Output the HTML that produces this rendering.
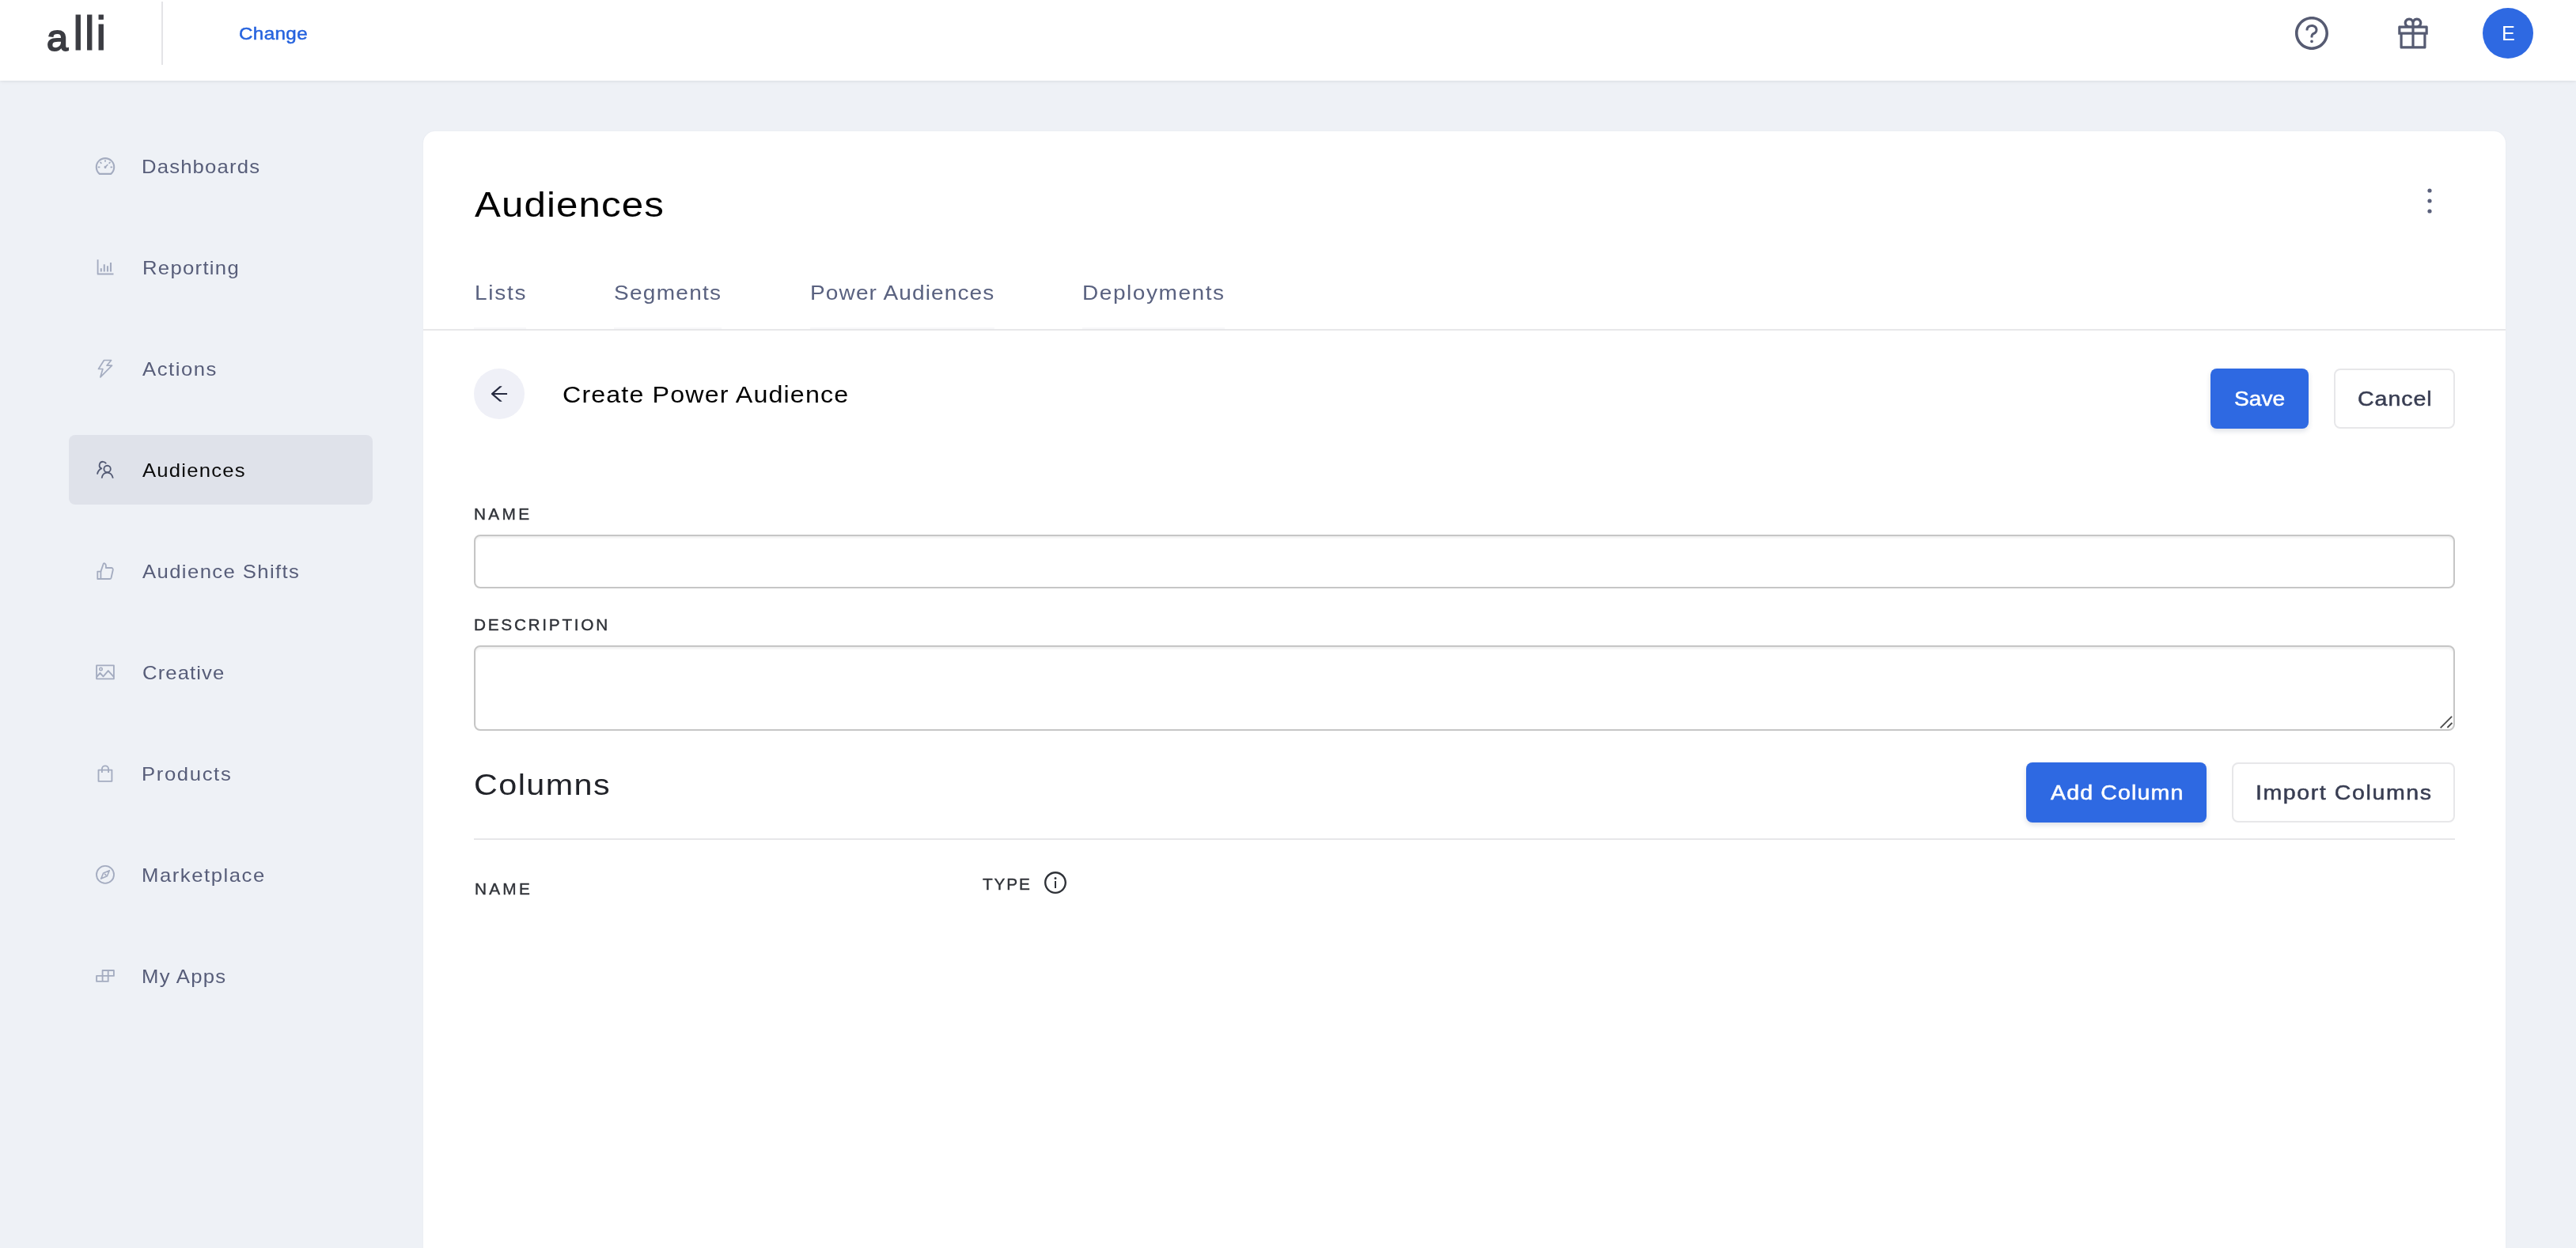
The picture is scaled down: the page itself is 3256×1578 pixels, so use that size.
<!DOCTYPE html>
<html lang="en"><head><meta charset="utf-8"><title>Alli - Audiences</title>
<style>
html,body{margin:0;padding:0}
body{width:3256px;height:1578px;overflow:hidden;position:relative;background:#eef1f6;font-family:"Liberation Sans",sans-serif}
.a{position:absolute;display:block}
.t{position:absolute;display:block;will-change:transform;white-space:pre;line-height:1;transform-origin:0 50%;text-decoration:none;margin:0;font-weight:400}
#hdr{left:0;top:0;width:3256px;height:102px;background:#fff;box-shadow:0 1px 4px rgba(0,0,0,.085)}
#vdiv{left:204px;top:2px;width:2px;height:80px;background:#e4e4e7}
#avatar{left:3138px;top:10px;width:64px;height:64px;border-radius:50%;background:#2e69e2}
.nav{position:absolute;left:87px;width:384px;height:88px;border-radius:8px;display:block}
.nav.sel{background:#dfe2ea}
#card{left:535px;top:166px;width:2632px;height:1500px;background:#fff;border-radius:15px;box-shadow:0 0 3px rgba(60,70,110,.045)}
#tabline{left:535px;top:416px;width:2632px;height:2px;background:#e7e7e9}
.tabu{position:absolute;top:414px;height:2px;background:#f8f8fa}
#back{left:599px;top:466px;width:64px;height:64px;border-radius:50%;background:#eff0f7}
.btn{position:absolute;box-sizing:border-box;height:76px;border-radius:8px;border:0;padding:0;margin:0}
.btn.p{background:#2e69e2;box-shadow:0 3px 6px rgba(20,40,90,.15)}
.btn.s{background:#fff;border:2px solid #e7e7e9}
.inp{position:absolute;box-sizing:border-box;left:599px;width:2504px;border:2px solid #c6c6c6;border-radius:8px;background:#fff;box-shadow:inset 0 2px 3px rgba(0,0,0,.07);margin:0;padding:0;resize:none;outline:0}
#colline{left:599px;top:1060px;width:2504px;height:2px;background:#e7e7e9}
</style></head><body>
<header id="hdr" class="a"></header>
<div id="logo"><span class="t" style="left:58.9px;top:25px;font-size:46px;color:#3b3c42;letter-spacing:0.0px;-webkit-text-stroke:1.8px #3b3c42;transform:scaleX(1.058);">a</span><span class="t" style="left:92.0px;top:12px;font-size:60.6px;color:#3b3c42;letter-spacing:1.0px;-webkit-text-stroke:1.0px #3b3c42;">lli</span></div>
<div id="vdiv" class="a"></div>
<a class="t" style="left:302.2px;top:32px;font-size:22.6px;color:#2663de;letter-spacing:0.36px;-webkit-text-stroke:0.5px #2663de;transform:scaleX(1.07);">Change</a>
<svg class="a" style="left:2898.0px;top:18.0px" width="48" height="48" viewBox="0 0 1024 1024" fill="#565b72"><path d="M512 64C264.600 64 64 264.600 64 512s200.600 448 448 448 448-200.600 448-448S759.400 64 512 64zm0 820c-205.400 0-372-166.600-372-372s166.600-372 372-372 372 166.600 372 372-166.600 372-372 372z"/><path d="M623.600 316.700C593.600 290.400 554 276 512 276s-81.600 14.500-111.600 40.700C369.200 344 352 380.700 352 420v7.600c0 4.400 3.600 8 8 8h48c4.400 0 8-3.600 8-8V420c0-44.100 43.100-80 96-80s96 35.900 96 80c0 31.100-22 59.600-56.100 72.700-21.200 8.100-39.200 22.300-52.100 40.900-13.100 19-19.900 41.800-19.900 64.900V620c0 4.400 3.600 8 8 8h48c4.400 0 8-3.600 8-8v-22.700a48.300 48.300 0 0 1 30.900-44.800c59-22.700 97.100-74.700 97.100-132.500.1-39.300-17.100-76-48.300-103.300zM472 732a40 40 0 1 0 80 0 40 40 0 1 0-80 0z"/></svg>
<svg class="a" style="left:3026.0px;top:18.0px" width="48" height="48" viewBox="0 0 1024 1024" fill="#565b72"><path d="M880 310H732.400c13.600-21.400 21.600-46.800 21.600-74 0-76.100-61.900-138-138-138-41.400 0-78.700 18.400-104 47.400-25.300-29-62.600-47.400-104-47.400-76.100 0-138 61.900-138 138 0 27.200 7.900 52.600 21.600 74H144c-17.700 0-32 14.300-32 32v200c0 4.400 3.600 8 8 8h40v344c0 17.700 14.300 32 32 32h640c17.700 0 32-14.300 32-32V550h40c4.400 0 8-3.600 8-8V342c0-17.700-14.300-32-32-32zm-334-74c0-38.600 31.400-70 70-70s70 31.400 70 70-31.400 70-70 70h-70v-70zm-138-70c38.600 0 70 31.400 70 70v70h-70c-38.600 0-70-31.400-70-70s31.400-70 70-70zM180 482V378h298v104H180zm48 68h250v308H228V550zm568 308H546V550h250v308zm48-376H546V378h298v104z"/></svg>
<div id="avatar" class="a"></div>
<span class="t" style="left:3161.6px;top:30px;font-size:25.3px;color:#ffffff;letter-spacing:0.0px;transform:scaleX(0.986);">E</span>
<nav><a class="nav" style="top:166px"></a><a class="nav" style="top:294px"></a><a class="nav" style="top:422px"></a><a class="nav sel" style="top:550px"></a><a class="nav" style="top:678px"></a><a class="nav" style="top:806px"></a><a class="nav" style="top:934px"></a><a class="nav" style="top:1062px"></a><a class="nav" style="top:1190px"></a></nav>
<svg class="a" style="left:119.0px;top:196.0px" width="28" height="28" viewBox="0 0 1024 1024" fill="#a4acc0"><path d="M924.800 385.600a446.700 446.700 0 0 0-96-142.400 446.700 446.700 0 0 0-142.400-96C631.100 123.800 572.500 112 512 112s-119.100 11.800-174.400 35.200a446.700 446.700 0 0 0-142.400 96 446.700 446.700 0 0 0-96 142.400C75.800 440.900 64 499.500 64 560c0 132.700 58.300 257.700 159.900 343.100l1.700 1.400c5.800 4.800 13.100 7.500 20.600 7.500h531.700c7.500 0 14.800-2.700 20.600-7.500l1.700-1.400C901.700 817.700 960 692.700 960 560c0-60.500-11.900-119.100-35.200-174.400zM761.400 836H262.600A371.120 371.120 0 0 1 140 560c0-99.400 38.700-192.800 109-263 70.300-70.300 163.700-109 263-109 99.400 0 192.800 38.700 263 109 70.300 70.300 109 163.700 109 263 0 105.600-44.500 205.500-122.600 276zM623.500 421.500a8.030 8.030 0 0 0-11.300 0L527.700 506c-18.700-5-39.400-.2-54.100 14.500a55.950 55.950 0 0 0 0 79.200 55.950 55.950 0 0 0 79.200 0 55.870 55.870 0 0 0 14.500-54.100l84.500-84.500c3.100-3.100 3.100-8.200 0-11.300l-28.300-28.300zM490 320h44c4.400 0 8-3.600 8-8v-80c0-4.400-3.600-8-8-8h-44c-4.400 0-8 3.600-8 8v80c0 4.400 3.600 8 8 8zm260 218v44c0 4.400 3.600 8 8 8h80c4.400 0 8-3.600 8-8v-44c0-4.400-3.600-8-8-8h-80c-4.400 0-8 3.600-8 8zm12.700-197.200l-31.100-31.100a8.030 8.030 0 0 0-11.300 0l-56.600 56.600a8.030 8.030 0 0 0 0 11.300l31.100 31.100c3.100 3.100 8.200 3.100 11.300 0l56.600-56.600c3.100-3.100 3.100-8.200 0-11.300zm-458.600-31.100a8.030 8.030 0 0 0-11.300 0l-31.100 31.100a8.030 8.030 0 0 0 0 11.300l56.600 56.600c3.100 3.100 8.200 3.100 11.300 0l31.100-31.100c3.100-3.100 3.100-8.200 0-11.300l-56.600-56.600zM262 530h-80c-4.400 0-8 3.600-8 8v44c0 4.400 3.600 8 8 8h80c4.400 0 8-3.600 8-8v-44c0-4.400-3.600-8-8-8z"/></svg><svg class="a" style="left:113px;top:318px" width="40" height="40" viewBox="113 318 40 40" fill="none" stroke="#a4acc0" stroke-width="1.85" stroke-linejoin="round" stroke-linecap="butt"><path d="M123.600 328.300V346.500H143.500"/><path d="M127.800 339.200v4.400M131.800 334.200v9.400M136 336.300v7.300M140 332.100v11.500" stroke-width="2.100"/></svg><svg class="a" style="left:113px;top:446px" width="40" height="40" viewBox="113 446 40 40" fill="none" stroke="#a4acc0" stroke-width="1.85" stroke-linejoin="round" stroke-linecap="butt"><path d="M131.500 455.500H140.600L135 462.200H141.500L126.900 476.800L129.900 466.500H124.500Z" stroke-width="1.700"/></svg><svg class="a" style="left:113px;top:574px" width="40" height="40" viewBox="113 574 40 40" fill="none" stroke="#535a74" stroke-width="1.85" stroke-linejoin="round" stroke-linecap="butt"><circle cx="135.600" cy="592.900" r="4.200"/><path d="M128.600 604.600C129.300 600.400 132 597.600 135.600 597.600S141.900 600.400 142.800 604.600"/><path d="M134.200 586.200C133.300 584.700 131.900 583.800 130.200 583.800A4.500 4.500 0 0 0 128.300 592.400C125.600 593.500 123.600 596 123 599.600"/></svg><svg class="a" style="left:113px;top:702px" width="40" height="40" viewBox="113 702 40 40" fill="none" stroke="#a4acc0" stroke-width="1.85" stroke-linejoin="round" stroke-linecap="butt"><rect x="123.300" y="722.600" width="4.100" height="9.400"/><path d="M127.400 722.600L130.600 713.200C131 712.200 131.600 712 132.200 712.300C133.300 712.800 133.900 713.800 133.900 715V718H140.800C142 718 143 719.200 142.800 720.500L140.600 730.400C140.300 731.400 139.600 732 138.600 732H127.400"/></svg><svg class="a" style="left:113px;top:830px" width="40" height="40" viewBox="113 830 40 40" fill="none" stroke="#a4acc0" stroke-width="1.85" stroke-linejoin="round" stroke-linecap="butt"><rect x="122.100" y="841.300" width="21.800" height="17"/><circle cx="127.500" cy="846" r="1.700" stroke-width="1.600"/><path d="M122.300 855.800L126.500 851L130.500 855.300L136.800 848.100L143.800 855.800" stroke-width="1.900"/></svg><svg class="a" style="left:113px;top:958px" width="40" height="40" viewBox="113 958 40 40" fill="none" stroke="#a4acc0" stroke-width="1.85" stroke-linejoin="round" stroke-linecap="butt"><rect x="124.500" y="973.600" width="16.900" height="14.200"/><path d="M128.900 977V972.400A4.100 4.100 0 0 1 137.100 972.400V977"/></svg><svg class="a" style="left:113px;top:1086px" width="40" height="40" viewBox="113 1086 40 40" fill="none" stroke="#a4acc0" stroke-width="1.85" stroke-linejoin="round" stroke-linecap="butt"><circle cx="133" cy="1105.900" r="11"/><path d="M138.300 1100.700L135.400 1107.800L127.700 1111.100L130.700 1103.900Z M132.100 1104.900L134.400 1106.900" stroke-width="1.600"/></svg><svg class="a" style="left:113px;top:1214px" width="40" height="40" viewBox="113 1214 40 40" fill="none" stroke="#a4acc0" stroke-width="1.85" stroke-linejoin="round" stroke-linecap="butt"><path d="M129.600 1233.900V1227H143.900V1233.900H122.100V1240.900H136.700V1227M129.600 1233.900V1240.900"/></svg>
<span class="t" style="left:179.4px;top:199px;font-size:24.0px;color:#575d79;letter-spacing:1.09px;transform:scaleX(1.07);">Dashboards</span><span class="t" style="left:179.5px;top:327px;font-size:24.0px;color:#575d79;letter-spacing:1.21px;transform:scaleX(1.07);">Reporting</span><span class="t" style="left:179.8px;top:455px;font-size:24.0px;color:#575d79;letter-spacing:1.44px;transform:scaleX(1.07);">Actions</span><span class="t" style="left:179.8px;top:583px;font-size:24.0px;color:#0a0a0a;letter-spacing:1.12px;transform:scaleX(1.07);">Audiences</span><span class="t" style="left:180.0px;top:711px;font-size:24.0px;color:#575d79;letter-spacing:1.3px;transform:scaleX(1.07);">Audience Shifts</span><span class="t" style="left:179.5px;top:839px;font-size:24.0px;color:#575d79;letter-spacing:1.02px;transform:scaleX(1.07);">Creative</span><span class="t" style="left:179.4px;top:967px;font-size:24.0px;color:#575d79;letter-spacing:1.52px;transform:scaleX(1.07);">Products</span><span class="t" style="left:179.4px;top:1095px;font-size:24.0px;color:#575d79;letter-spacing:1.43px;transform:scaleX(1.07);">Marketplace</span><span class="t" style="left:179.4px;top:1223px;font-size:24.0px;color:#575d79;letter-spacing:1.19px;transform:scaleX(1.07);">My Apps</span>
<main id="card" class="a"></main>
<h1 class="t" style="left:600.1px;top:236px;font-size:44.8px;color:#000000;letter-spacing:1.01px;transform:scaleX(1.1);">Audiences</h1>
<svg class="a" style="left:3061px;top:231px" width="20" height="46" viewBox="0 0 20 46" fill="#5a607b"><circle cx="10" cy="10" r="2.600"/><circle cx="10" cy="23" r="2.600"/><circle cx="10" cy="36" r="2.600"/></svg>
<span class="t" style="left:599.5px;top:357px;font-size:26.2px;color:#5a6280;letter-spacing:1.6px;transform:scaleX(1.07);">Lists</span><span class="t" style="left:776.0px;top:357px;font-size:26.2px;color:#5a6280;letter-spacing:1.19px;transform:scaleX(1.07);">Segments</span><span class="t" style="left:1024.0px;top:357px;font-size:26.2px;color:#5a6280;letter-spacing:1.05px;transform:scaleX(1.07);">Power Audiences</span><span class="t" style="left:1367.9px;top:357px;font-size:26.2px;color:#5a6280;letter-spacing:1.45px;transform:scaleX(1.07);">Deployments</span>
<div class="tabu" style="left:599px;width:66px"></div><div class="tabu" style="left:776px;width:136px"></div><div class="tabu" style="left:1024px;width:233px"></div><div class="tabu" style="left:1368px;width:180px"></div>
<div id="tabline" class="a"></div>
<div id="back" class="a"></div>
<svg class="a" style="left:617.0px;top:484.0px" width="28" height="28" viewBox="0 0 1024 1024" fill="#262a40"><path d="M872 474H286.900l350.200-304c5.600-4.900 2.200-14-5.200-14h-88.500c-3.900 0-7.600 1.400-10.500 3.900L155 487.800a31.960 31.960 0 0 0 0 48.300L535.100 866c1.500 1.300 3.300 2 5.200 2h91.500c7.400 0 10.800-9.200 5.200-14L286.900 550H872c4.400 0 8-3.600 8-8v-60c0-4.400-3.600-8-8-8z"/></svg>
<h2 class="t" style="left:710.8px;top:484px;font-size:29.6px;color:#000000;letter-spacing:1.02px;transform:scaleX(1.09);">Create Power Audience</h2>
<button class="btn p" style="left:2794px;top:466px;width:124px"></button><span class="t" style="left:2823.9px;top:491px;font-size:26.0px;color:#ffffff;letter-spacing:0.0px;-webkit-text-stroke:0.5px #ffffff;transform:scaleX(1.081);">Save</span>
<button class="btn s" style="left:2950px;top:466px;width:153px"></button><span class="t" style="left:2980.3px;top:491px;font-size:26.0px;color:#383d52;letter-spacing:0.84px;-webkit-text-stroke:0.5px #383d52;transform:scaleX(1.1);">Cancel</span>
<label class="t" style="left:599.4px;top:640px;font-size:20.8px;color:#2f3238;letter-spacing:3.33px;-webkit-text-stroke:0.4px #2f3238;">NAME</label>
<input class="inp" type="text" style="top:676px;height:68px">
<label class="t" style="left:599.4px;top:780px;font-size:20.8px;color:#2f3238;letter-spacing:2.71px;-webkit-text-stroke:0.4px #2f3238;">DESCRIPTION</label>
<textarea class="inp" style="top:816px;height:108px"></textarea>
<svg class="a" style="left:3080px;top:902px" width="22" height="22" viewBox="3080 902 22 22" stroke="#4a4a4a" stroke-width="1.800" fill="none"><path d="M3084.700 920.400L3099.100 905.900M3093.400 920L3099.400 914"/></svg>
<h3 class="t" style="left:599.4px;top:975px;font-size:36.9px;color:#212329;letter-spacing:1.29px;transform:scaleX(1.12);">Columns</h3>
<button class="btn p" style="left:2561px;top:964px;width:228px"></button><span class="t" style="left:2591.5px;top:989px;font-size:26.0px;color:#ffffff;letter-spacing:1.0px;-webkit-text-stroke:0.5px #ffffff;transform:scaleX(1.1);">Add Column</span>
<button class="btn s" style="left:2821px;top:964px;width:282px"></button><span class="t" style="left:2850.6px;top:989px;font-size:26.0px;color:#383d52;letter-spacing:1.41px;-webkit-text-stroke:0.5px #383d52;transform:scaleX(1.1);">Import Columns</span>
<div id="colline" class="a"></div>
<span class="t" style="left:599.8px;top:1114px;font-size:20.8px;color:#2f3238;letter-spacing:3.23px;-webkit-text-stroke:0.4px #2f3238;">NAME</span><span class="t" style="left:1241.5px;top:1108px;font-size:20.8px;color:#2f3238;letter-spacing:1.87px;-webkit-text-stroke:0.4px #2f3238;">TYPE</span>
<svg class="a" style="left:1318.0px;top:1100.0px" width="32" height="32" viewBox="0 0 1024 1024" fill="#2f3238"><path d="M512 64C264.600 64 64 264.600 64 512s200.600 448 448 448 448-200.600 448-448S759.400 64 512 64zm0 820c-205.400 0-372-166.600-372-372s166.600-372 372-372 372 166.600 372 372-166.600 372-372 372z"/><path d="M464 336a48 48 0 1 0 96 0 48 48 0 1 0-96 0zm72 112h-48c-4.400 0-8 3.600-8 8v272c0 4.400 3.600 8 8 8h48c4.400 0 8-3.600 8-8V456c0-4.400-3.600-8-8-8z"/></svg>
</body></html>
